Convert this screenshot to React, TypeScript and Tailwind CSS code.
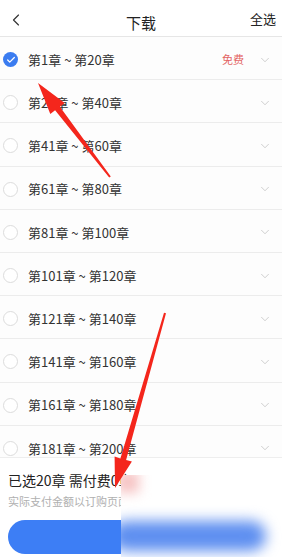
import { ChevronLeft, ChevronDown, Check } from 'lucide-react'

const ranges = [
  [1, 20],
  [21, 40],
  [41, 60],
  [61, 80],
  [81, 100],
  [101, 120],
  [121, 140],
  [141, 160],
  [161, 180],
  [181, 200],
]

function Row({ from, to, checked, free }: { from: number; to: number; checked?: boolean; free?: boolean }) {
  return (
    <div className="flex h-[43.2px] shrink-0 items-center border-b border-[#ececec] pl-[3px] pr-[10px] pt-[3px]">
      {checked ? (
        <span className="flex h-[15px] w-[15px] items-center justify-center rounded-full bg-[#3b7cf0]">
          <Check size={10} strokeWidth={3} className="text-white" />
        </span>
      ) : (
        <span className="h-[15px] w-[15px] rounded-full border border-[#dcdcdc] bg-white"></span>
      )}
      <span className="ml-[10px] flex-1 text-[13px] text-[#333]">
        第{from}章 ~ 第{to}章
      </span>
      {free && <span className="mr-[14px] text-[11px] text-[#e36464]">免费</span>}
      <ChevronDown size={14} strokeWidth={1.1} className="text-[#b5b5b5]" />
    </div>
  )
}

export default function App() {
  return (
    <div
      className="relative h-[557px] w-[294px] overflow-hidden bg-white"
      style={{ fontFamily: '"Noto Sans CJK SC", "Noto Sans", sans-serif' }}
    >
      <div className="flex h-full w-[282px] flex-col bg-[#fdfdfd]">
        {/* Header */}
        <div className="relative flex h-[37px] shrink-0 items-center border-b border-[#e6e6e6] bg-white px-[6px] pt-[4px]">
          <ChevronLeft size={20} strokeWidth={1.4} className="text-[#333]" />
          <span className="absolute left-1/2 top-[12px] -translate-x-1/2 text-[15px] text-[#222]">下载</span>
          <span className="ml-auto mb-[3px] text-[13px] text-[#222]">全选</span>
        </div>

        {/* List */}
        <div className="flex flex-1 flex-col overflow-hidden">
          {ranges.map(([a, b], i) => (
            <Row key={a} from={a} to={b} checked={i === 0} free={i === 0} />
          ))}
        </div>

        {/* Footer */}
        <div className="h-[100px] shrink-0 border-t border-[#eeeeee] bg-white px-[8px] pt-[12px]">
          <div className="text-[14px] leading-[20px] text-[#222]">已选20章 需付费0章</div>
          <div className="mt-[4px] text-[11px] leading-[14px] text-[#b0b0b0]">实际支付金额以订购页面为准</div>
          <div className="mt-[12px] h-[34px] rounded-full bg-[#3d7ef5]"></div>
        </div>
      </div>

      {/* Blurred patch */}
      <div className="absolute left-[121px] top-[475px] h-[82px] w-[173px] overflow-hidden bg-white">
        <div className="absolute -left-[4px] -top-[4px] h-[22px] w-[22px] bg-[#f6c4c4] blur-[6px]"></div>
        <div className="absolute -left-[10px] top-[46px] h-[30px] w-[155px] rounded-full bg-[#5e8ff0] blur-[7px]"></div>
      </div>

      {/* Annotation arrows */}
      <svg className="pointer-events-none absolute left-0 top-0" width="294" height="557" viewBox="0 0 294 557">
        <polygon
          points="110.8,176.4 59.9,106.7 64.7,103 38,83 50.3,114 55.1,110.3 109.2,177.6"
          fill="#f4261c"
        />
        <polygon
          points="166,313.3 126.1,459.9 131.9,461.6 115,488 114.6,456.6 120.4,458.4 164,312.7"
          fill="#f4261c"
        />
      </svg>
    </div>
  )
}
